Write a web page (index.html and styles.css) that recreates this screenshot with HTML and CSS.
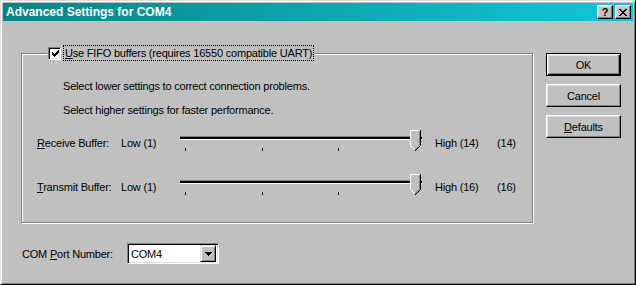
FILE: index.html
```html
<!DOCTYPE html>
<html lang="en">
<head>
    <meta charset="UTF-8">
    <title>Advanced Settings for COM4</title>
    <link rel="stylesheet" href="styles.css">
</head>
<body>
    <div class="window">
        <div class="titlebar">
            <span class="title">Advanced Settings for COM4</span>
            <div class="title-buttons">
                <button class="tbtn help">?</button>
                <button class="tbtn close">
                    <svg width="8" height="7" viewBox="0 0 8 7">
                        <path d="M0 0h2v1h1v1h2V1h1V0h2v1H7v1H6v1H5v1h1v1h1v1h1v1H6V6H5V5H3v1H2v1H0V6h1V5h1V4h1V3H2V2H1V1H0z" fill="#000"/>
                    </svg>
                </button>
            </div>
        </div>

        <div class="content">
            <div class="main">
                <div class="group">
                    <div class="group-head">
                        <span class="check">
                            <svg width="9" height="9" viewBox="0 0 9 9">
                                <path d="M1 3h1v1h1v1h1V4h1V3h1V2h1V1h1v3H7v1H6v1H5v1H4v1H3V7H2V6H1z" fill="#000"/>
                            </svg>
                        </span>
                        <span class="focus"><u>U</u>se FIFO buffers (requires 16550 compatible UART)</span>
                    </div>

                    <p class="hint">Select lower settings to correct connection problems.</p>
                    <p class="hint">Select higher settings for faster performance.</p>

                    <div class="slider-row">
                        <span><u>R</u>eceive Buffer:</span>
                        <span>Low (1)</span>
                        <div class="slider">
                            <div class="track"></div>
                            <div class="ticks"><i></i><i></i><i></i><i></i></div>
                            <svg class="thumb" width="11" height="20" viewBox="0 0 11 20">
                                <path d="M0 0H11V15L5.5 20L0 15Z" fill="#c0c0c0"/>
                                <path d="M0.5 15V0.5H10" stroke="#fff" fill="none"/>
                                <path d="M0.5 15.5L5 20" stroke="#fff" fill="none"/>
                                <path d="M9.5 1V15L5 19.5" stroke="#808080" fill="none"/>
                                <path d="M10.5 0V15.5L5.5 20.5" stroke="#000" fill="none"/>
                            </svg>
                        </div>
                        <span class="high">High (14)</span>
                        <span>(14)</span>
                    </div>

                    <div class="slider-row">
                        <span><u>T</u>ransmit Buffer:</span>
                        <span>Low (1)</span>
                        <div class="slider">
                            <div class="track"></div>
                            <div class="ticks"><i></i><i></i><i></i><i></i></div>
                            <svg class="thumb" width="11" height="20" viewBox="0 0 11 20">
                                <path d="M0 0H11V15L5.5 20L0 15Z" fill="#c0c0c0"/>
                                <path d="M0.5 15V0.5H10" stroke="#fff" fill="none"/>
                                <path d="M0.5 15.5L5 20" stroke="#fff" fill="none"/>
                                <path d="M9.5 1V15L5 19.5" stroke="#808080" fill="none"/>
                                <path d="M10.5 0V15.5L5.5 20.5" stroke="#000" fill="none"/>
                            </svg>
                        </div>
                        <span class="high">High (16)</span>
                        <span>(16)</span>
                    </div>
                </div>

                <div class="port-row">
                    <span class="port-label">COM <u>P</u>ort Number:</span>
                    <div class="combo">
                        <span class="combo-value">COM4</span>
                        <span class="combo-btn">
                            <svg width="7" height="4" viewBox="0 0 7 4">
                                <path d="M0 0h7v1H6v1H5v1H4v1H3V3H2V2H1V1H0z" fill="#000"/>
                            </svg>
                        </span>
                    </div>
                </div>
            </div>

            <div class="actions">
                <button class="btn default">OK</button>
                <button class="btn">Cancel</button>
                <button class="btn"><u>D</u>efaults</button>
            </div>
        </div>
    </div>
</body>
</html>
```

FILE: styles.css
```css
body {
    margin: 0;
    font-family: "Liberation Sans", Arial, sans-serif;
    font-size: 11px;
    letter-spacing: -0.2px;
    color: #000;
}

p {
    margin: 0;
}

.window {
    width: 636px;
    height: 285px;
    box-sizing: border-box;
    background: #c0c0c0;
    border: 1px solid;
    border-color: #dfdfdf #000 #000 #dfdfdf;
    box-shadow: inset 1px 1px 0 #fff, inset -1px -1px 0 #808080;
    padding: 2px;
    display: flex;
    flex-direction: column;
}

.titlebar {
    height: 18px;
    background: linear-gradient(90deg, #088484, #10c8d8);
    display: flex;
    align-items: center;
    padding: 0 2px 0 3px;
}

.title {
    color: #fff;
    font-weight: bold;
    font-size: 12px;
    letter-spacing: 0;
    flex: 1;
}

.title-buttons {
    display: flex;
    gap: 2px;
}

.tbtn {
    width: 16px;
    height: 14px;
    padding: 0;
    box-sizing: border-box;
    background: #c0c0c0;
    border: 1px solid;
    border-color: #fff #000 #000 #fff;
    box-shadow: inset -1px -1px 0 #808080, inset 1px 1px 0 #dfdfdf;
    display: flex;
    align-items: center;
    justify-content: center;
    font-family: "Liberation Sans", Arial, sans-serif;
    font-weight: bold;
    font-size: 11px;
    line-height: 1;
    color: #000;
}

.content {
    display: flex;
    gap: 13px;
    padding: 32px 0 0 18px;
}

.main {
    width: 512px;
}

.group {
    height: 170px;
    box-sizing: border-box;
    border: 1px solid #808080;
    box-shadow: 1px 1px 0 #fff, inset 1px 1px 0 #fff;
}

.group-head {
    display: flex;
    align-items: center;
    width: fit-content;
    height: 16px;
    margin: -9px 0 0 25px;
    padding: 0 2px 0 1px;
    background: #c0c0c0;
}

.check {
    width: 13px;
    height: 13px;
    box-sizing: border-box;
    background: #fff;
    border: 1px solid;
    border-color: #808080 #fff #fff #808080;
    box-shadow: inset 1px 1px 0 #000, inset -1px -1px 0 #dfdfdf;
    display: flex;
    align-items: center;
    justify-content: center;
    padding: 1px 0 0 1px;
}

.focus {
    margin-left: 3px;
    padding: 0 1px;
    line-height: 14px;
    outline: 1px dotted #000;
}

.hint {
    line-height: 24px;
    padding-left: 41px;
}

.group .hint:first-of-type {
    margin-top: 13px;
}

.slider-row {
    display: grid;
    grid-template-columns: 84px 59px 242px 75px auto;
    align-items: center;
    padding-left: 15px;
    height: 26px;
    margin-top: 8px;
}

.slider-row + .slider-row {
    margin-top: 18px;
}

.slider-row .high {
    padding-left: 13px;
}

.slider {
    position: relative;
    height: 26px;
}

.track {
    margin-top: 6px;
    height: 2px;
    background: #000;
    border-top: 1px solid #808080;
    border-bottom: 1px solid #fff;
}

.ticks {
    display: flex;
    justify-content: space-between;
    padding: 0 6px 0 5px;
    margin-top: 8px;
}

.ticks i {
    width: 1px;
    height: 3px;
    background: #000;
}

.thumb {
    position: absolute;
    left: 230px;
    top: 0;
}

.port-row {
    display: flex;
    align-items: center;
    margin-top: 20px;
    padding-left: 1px;
}

.port-label {
    width: 105px;
}

.combo {
    width: 92px;
    height: 21px;
    box-sizing: border-box;
    background: #fff;
    border: 1px solid;
    border-color: #808080 #fff #fff #808080;
    box-shadow: inset 1px 1px 0 #000, inset -1px -1px 0 #dfdfdf;
    padding: 2px;
    display: flex;
    align-items: center;
}

.combo-value {
    flex: 1;
    padding-left: 1px;
}

.combo-btn {
    width: 16px;
    height: 17px;
    box-sizing: border-box;
    background: #c0c0c0;
    border: 1px solid;
    border-color: #dfdfdf #000 #000 #dfdfdf;
    box-shadow: inset 1px 1px 0 #fff, inset -1px -1px 0 #808080;
    display: flex;
    align-items: center;
    justify-content: center;
}

.actions {
    display: flex;
    flex-direction: column;
    gap: 8px;
}

.btn {
    width: 75px;
    height: 23px;
    box-sizing: border-box;
    background: #c0c0c0;
    border: 1px solid;
    border-color: #fff #000 #000 #fff;
    box-shadow: inset -1px -1px 0 #808080, inset 1px 1px 0 #dfdfdf;
    font-family: "Liberation Sans", Arial, sans-serif;
    font-size: 11px;
    letter-spacing: -0.2px;
    color: #000;
    padding: 0;
}

.btn.default {
    border-color: #000;
    box-shadow: inset 1px 1px 0 #fff, inset -1px -1px 0 #000, inset -2px -2px 0 #808080, inset 2px 2px 0 #dfdfdf;
}
```
